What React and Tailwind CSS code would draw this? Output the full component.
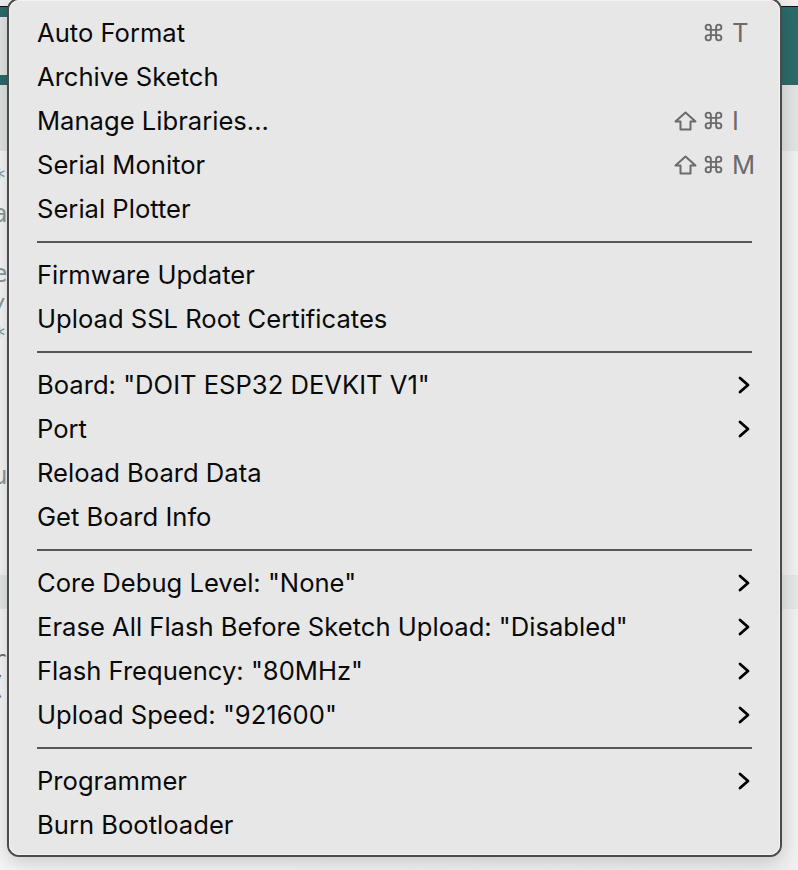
import React from 'react';

const menuGroups = [
  [
    { label: 'Auto Format', keys: { cmd: true, key: 'T' } },
    { label: 'Archive Sketch' },
    { label: 'Manage Libraries...', keys: { shift: true, cmd: true, key: 'I' } },
    { label: 'Serial Monitor', keys: { shift: true, cmd: true, key: 'M' } },
    { label: 'Serial Plotter' },
  ],
  [{ label: 'Firmware Updater' }, { label: 'Upload SSL Root Certificates' }],
  [
    { label: 'Board: "DOIT ESP32 DEVKIT V1"', sub: true },
    { label: 'Port', sub: true },
    { label: 'Reload Board Data' },
    { label: 'Get Board Info' },
  ],
  [
    { label: 'Core Debug Level: "None"', sub: true },
    { label: 'Erase All Flash Before Sketch Upload: "Disabled"', sub: true },
    { label: 'Flash Frequency: "80MHz"', sub: true },
    { label: 'Upload Speed: "921600"', sub: true },
  ],
  [{ label: 'Programmer', sub: true }, { label: 'Burn Bootloader' }],
];

const CmdIcon = () => (
  <svg width="21" height="21" viewBox="0 0 24 24" fill="none" stroke="#6b6b6b" strokeWidth="2.2">
    <path d="M15 6v12a3 3 0 1 0 3-3H6a3 3 0 1 0 3 3V6a3 3 0 1 0-3 3h12a3 3 0 1 0-3-3" />
  </svg>
);

const ShiftIcon = () => (
  <svg width="23" height="20" viewBox="0 0 23 20" fill="none" stroke="#6b6b6b" strokeWidth="2" strokeLinejoin="round">
    <path d="M11.5 1.5 L21.5 10.5 H16.5 V18.5 H6.5 V10.5 H1.5 Z" />
  </svg>
);

const Chevron = () => (
  <svg width="12" height="18" viewBox="0 0 12 18" fill="none" stroke="#000" strokeWidth="2.8" strokeLinecap="round" strokeLinejoin="round">
    <path d="M2 2 L10 9 L2 16" />
  </svg>
);

const Shortcut = ({ shift, cmd, keyName }) => (
  <div className="flex items-center text-[#6b6b6b]">
    {shift && (
      <span className="flex w-[29px] items-center">
        <ShiftIcon />
      </span>
    )}
    {cmd && (
      <span className="flex w-[29px] items-center">
        <CmdIcon />
      </span>
    )}
    <span className="w-[20px]">{keyName}</span>
  </div>
);

const MenuItem = ({ item }) => (
  <div className="flex h-[44px] items-center justify-between">
    <span>{item.label}</span>
    {item.keys && <Shortcut shift={item.keys.shift} cmd={item.keys.cmd} keyName={item.keys.key} />}
    {item.sub && (
      <span className="mr-[2px] flex items-center">
        <Chevron />
      </span>
    )}
  </div>
);

const Separator = () => (
  <div className="flex h-[22px] items-center">
    <div className="h-[2px] w-full bg-[#565656]" />
  </div>
);

export default function App() {
  return (
    <div className="relative h-[870px] w-[798px] overflow-hidden bg-[#f3f3f3]">
      {/* the editor window behind the menu */}
      <div className="flex h-full flex-col">
        <div className="h-[6px] bg-[#eeeeee]" />
        <div className="h-[1px] bg-[#111]" />
        <div className="flex h-[78px]">
          <div className="flex w-[8px] flex-col">
            <div className="h-[10px] bg-[#2c6a6a]" />
            <div className="h-[58px] bg-[#e4e6e6]" />
            <div className="h-[10px] bg-[#2c6a6a]" />
          </div>
          <div className="flex-1 bg-[#2c6a6a]" />
        </div>
        <div className="h-[66px] bg-[#e2e4e4]" />
        <div className="flex flex-1 flex-col bg-gradient-to-r from-[#f6f6f6] to-[#f0f0f0] font-['DejaVu_Sans_Mono',monospace] text-[24px] leading-[22px] text-[#8a9a9a]">
          <div className="h-[16px]" />
          <div className="ml-[-8px]">*</div>
          <div className="ml-[-7px] mt-[14px]">a</div>
          <div className="ml-[-7px] mt-[38px]">e</div>
          <div className="ml-[-8px] mt-[12px]">/</div>
          <div className="ml-[-8px] mt-[6px]">*</div>
          <div className="ml-[-7px] mt-[118px]">u</div>
          <div className="mt-[88px] h-[34px] bg-[#e5e7e7]" />
          <div className="ml-[-8px] mt-[40px] text-[#6b7070]">r</div>
          <div className="ml-[-9px] mt-[4px] text-[#6b7070]">(</div>
          <div className="ml-[-9px] mt-[4px] text-[#6b7070]">!</div>
        </div>
      </div>

      {/* the Tools menu */}
      <div className="absolute left-[7px] top-[-2px] h-[859px] w-[775px] rounded-[12px] border-2 border-[#4a4a4a] bg-[#e7e7e7] shadow-[0_6px_20px_rgba(0,0,0,0.18)]">
        <div className="h-full rounded-[10px] border border-[#f4f4f4] px-[27px] pt-[10px] font-['Inter','Liberation_Sans',sans-serif] text-[25.6px] text-[#0a0a0a]">
          {menuGroups.map((group, gi) => (
            <div key={gi}>
              {gi > 0 && <Separator />}
              {group.map((item) => (
                <MenuItem key={item.label} item={item} />
              ))}
            </div>
          ))}
        </div>
      </div>
    </div>
  );
}
